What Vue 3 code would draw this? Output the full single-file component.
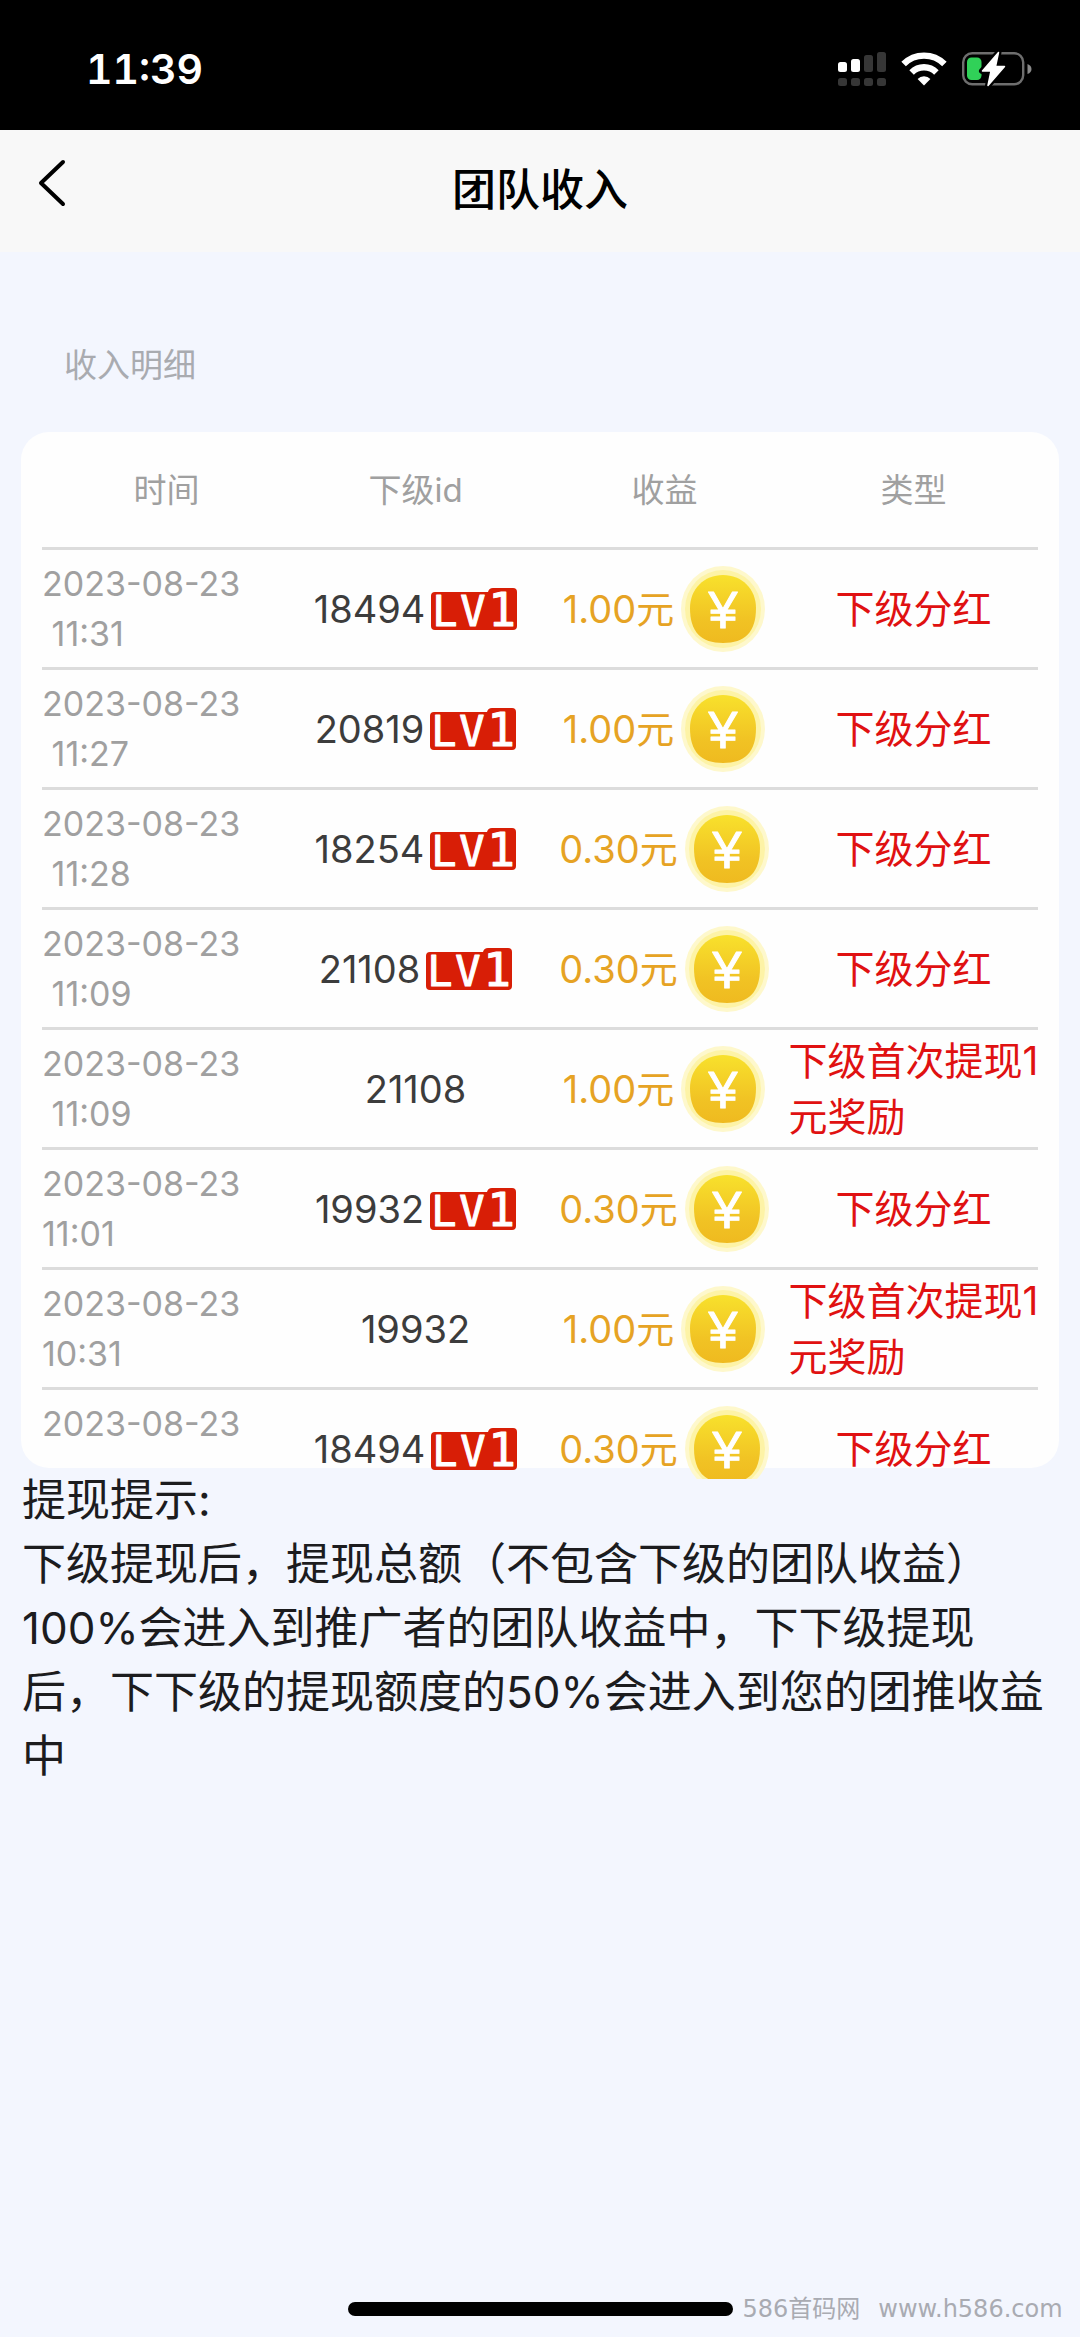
<script setup>
const records = [
  { date: '2023-08-23', time: ' 11:31', id: '18494', level: true, amount: '1.00', type: '下级分红' },
  { date: '2023-08-23', time: ' 11:27', id: '20819', level: true, amount: '1.00', type: '下级分红' },
  { date: '2023-08-23', time: ' 11:28', id: '18254', level: true, amount: '0.30', type: '下级分红' },
  { date: '2023-08-23', time: ' 11:09', id: '21108', level: true, amount: '0.30', type: '下级分红' },
  { date: '2023-08-23', time: ' 11:09', id: '21108', level: false, amount: '1.00', type: '下级首次提现1\n元奖励' },
  { date: '2023-08-23', time: '11:01', id: '19932', level: true, amount: '0.30', type: '下级分红' },
  { date: '2023-08-23', time: '10:31', id: '19932', level: false, amount: '1.00', type: '下级首次提现1\n元奖励' },
  { date: '2023-08-23', time: '', id: '18494', level: true, amount: '0.30', type: '下级分红' },
]
</script>

<template>
  <div class="page">
    <div class="status-bar">
      <span class="clock">11:39</span>
      <div class="status-icons">
        <svg width="48" height="34" viewBox="0 0 48 34" aria-hidden="true">
          <g fill="#fff">
            <rect x="0" y="10" width="9" height="10" rx="2.5" />
            <rect x="13" y="7" width="9" height="13" rx="2.5" />
          </g>
          <g fill="#363636">
            <rect x="26" y="3" width="9" height="17" rx="2.5" />
            <rect x="39" y="0" width="9" height="20" rx="2.5" />
            <rect x="0" y="26" width="9" height="8" rx="2.5" />
            <rect x="13" y="26" width="9" height="8" rx="2.5" />
            <rect x="26" y="26" width="9" height="8" rx="2.5" />
            <rect x="39" y="26" width="9" height="8" rx="2.5" />
          </g>
        </svg>
        <svg width="46" height="34" viewBox="0 0 46 34" aria-hidden="true">
          <g fill="none" stroke="#fff" stroke-width="6.4">
            <path d="M2.6 12 A29 29 0 0 1 43.4 12" />
            <path d="M10.6 20.4 A17.6 17.6 0 0 1 35.4 20.4" />
          </g>
          <path d="M23 33.4 L16.6 27 A9 9 0 0 1 29.4 27 Z" fill="#fff" />
        </svg>
        <svg width="70" height="38" viewBox="0 0 70 38" aria-hidden="true">
          <rect x="1.2" y="3.2" width="60" height="31" rx="9" fill="none" stroke="#6e6e6e" stroke-width="2.4" />
          <path d="M65.5 14 Q69.5 15.5 69.5 19 Q69.5 22.5 65.5 24 Z" fill="#8a8a8a" />
          <rect x="5" y="7.5" width="14.5" height="22.5" rx="4.5" fill="#30d158" />
          <path d="M36.5 2.5 L20 21 H29 L26 35.5 L42.5 16.5 H33 Z" fill="#fff" stroke="#000" stroke-width="6" stroke-linejoin="round" />
          <path d="M36.5 2.5 L20.5 21 H29 L26 35.5 L42.5 16.5 H33.5 Z" fill="#fff" stroke="#fff" stroke-width="1.5" stroke-linejoin="round" />
        </svg>
      </div>
    </div>

    <header class="nav">
      <button class="back" type="button" aria-label="返回">
        <svg width="30" height="50" viewBox="0 0 30 50" aria-hidden="true">
          <path d="M26 4 L4 25 L26 46" fill="none" stroke="#000" stroke-width="4" stroke-linecap="round" stroke-linejoin="round" />
        </svg>
      </button>
      <h1>团队收入</h1>
    </header>

    <main>
      <h2>收入明细</h2>

      <section class="card">
        <div class="scroller">
          <table>
            <thead>
              <tr>
                <th scope="col">时间</th>
                <th scope="col">下级id</th>
                <th scope="col">收益</th>
                <th scope="col">类型</th>
              </tr>
            </thead>
            <tbody>
              <tr v-for="(r, i) in records" :key="i">
                <td class="when">
                  <span>{{ r.date }}</span>
                  <span>{{ r.time }}</span>
                </td>
                <td>
                  <div class="cell member">
                    <span>{{ r.id }}</span>
                    <svg v-if="r.level" width="86" height="42" viewBox="0 0 86 42">
                      <path class="plate" d="M4 4 H57 V4 Q58 0 62 0 H82 Q86 0 86 4 V38 Q86 42 82 42 H4 Q0 42 0 38 V8 Q0 4 4 4 Z" />
                      <text x="14" y="38">L</text>
                      <text x="42" y="38">V</text>
                      <text class="rank" x="71" y="38">1</text>
                    </svg>
                  </div>
                </td>
                <td>
                  <div class="cell money">
                    <span>{{ r.amount }}元</span>
                    <svg width="86" height="88" viewBox="0 0 86 88">
                      <defs>
                        <linearGradient :id="'coin' + i" x1="0" y1="0" x2="0" y2="1">
                          <stop offset="0" stop-color="#f8e12c" />
                          <stop offset="0.65" stop-color="#f1c324" />
                          <stop offset="1" stop-color="#efba20" />
                        </linearGradient>
                      </defs>
                      <ellipse cx="43" cy="44" rx="42" ry="43" fill="#fef8cc" />
                      <ellipse cx="43" cy="44" rx="38" ry="39" fill="#fdf3a6" />
                      <path d="M43 10 C62 10 76 24 76 43 C76 67 65 78 43 78 C21 78 10 67 10 43 C10 24 24 10 43 10 Z" :fill="'url(#coin' + i + ')'" />
                      <text x="43" y="63">¥</text>
                    </svg>
                  </div>
                </td>
                <td>
                  <div class="cell kind"><span>{{ r.type }}</span></div>
                </td>
              </tr>
            </tbody>
          </table>
        </div>
      </section>

      <section class="notice">
        <p>提现提示:</p>
        <p>下级提现后，提现总额（不包含下级的团队收益）100%会进入到推广者的团队收益中，下下级提现后，下下级的提现额度的50%会进入到您的团推收益中</p>
      </section>
    </main>

    <footer>
      <div class="home-indicator"></div>
      <div class="watermark"><span>586首码网</span><span>www.h586.com</span></div>
    </footer>
  </div>
</template>

<style>
body {
  margin: 0;
  background: #f3f6fe;
}
</style>

<style scoped>
.page {
  display: flex;
  flex-direction: column;
  min-height: 100vh;
  background: #f3f6fe;
  color: #1c1c1e;
  font-family: Inter, "Noto Sans CJK SC", sans-serif;
}

h1,
h2,
p {
  margin: 0;
}

svg {
  display: block;
  flex: none;
  overflow: visible;
}

.status-bar {
  display: flex;
  align-items: center;
  justify-content: space-between;
  height: 130px;
  padding: 0 48px 0 86px;
  box-sizing: border-box;
  background: #000;
}

.clock {
  padding-top: 8px;
  color: #fff;
  font-size: 41px;
  font-weight: 600;
  font-variant-numeric: tabular-nums;
  line-height: 50px;
}

.status-icons {
  display: flex;
  align-items: center;
  gap: 15px;
  padding-top: 8px;
}

.nav {
  display: grid;
  grid-template-columns: 1fr auto 1fr;
  align-items: center;
  height: 122px;
  background: #f8f8f8;
  color: #000;
}

.back {
  justify-self: start;
  padding: 0 37px 16px;
  border: 0;
  background: none;
}

.nav h1 {
  padding-bottom: 2px;
  font-size: 44px;
  font-weight: 500;
  line-height: 64px;
}

main h2 {
  padding: 88px 64px 42px;
  color: #a9abb0;
  font-size: 33px;
  font-weight: 400;
  line-height: 50px;
}

.card {
  height: 1036px;
  margin: 0 21px;
  border-radius: 28px;
  background: #fefefe;
}

/* The list runs slightly past the bottom edge of the card. */
.scroller {
  position: relative;
  height: 1047px;
  padding: 0 21px;
  overflow: hidden;
}

table {
  width: 100%;
  table-layout: fixed;
  border-collapse: separate;
  border-spacing: 0;
}

th,
td {
  box-sizing: border-box;
  height: 120px;
  padding: 0;
  border-bottom: 3px solid #dcdcdc;
  vertical-align: middle;
}

th {
  height: 118px;
  padding-bottom: 4px;
  color: #a0a0a0;
  font-size: 33px;
  font-weight: 400;
}

.when {
  color: #a0a0a0;
  font-size: 34px;
  font-weight: 400;
  line-height: 50px;
}

.when span {
  display: block;
  min-height: 50px;
  white-space: pre;
}

.cell {
  display: flex;
  align-items: center;
  justify-content: center;
  font-size: 39px;
  line-height: 56px;
  white-space: nowrap;
}

.member {
  gap: 6px;
  color: #3c3c3c;
  font-size: 38px;
  font-weight: 400;
}

.member .plate {
  fill: #d81e06;
}

.member text {
  fill: #fff;
  stroke: #fff;
  stroke-width: 1;
  stroke-linejoin: round;
  font-family: "DejaVu Sans Mono", monospace;
  font-size: 42px;
  text-anchor: middle;
}

.member .rank {
  font-size: 46px;
}

.money {
  gap: 6px;
  color: #e6a324;
  font-size: 38px;
}

.money text {
  fill: #fff;
  stroke: #fff;
  stroke-width: 1;
  stroke-linejoin: round;
  font-family: "Liberation Sans", Arial, sans-serif;
  font-size: 52px;
  text-anchor: middle;
}

.kind {
  color: #e01111;
}

.kind span {
  white-space: pre;
}

.notice {
  padding: 0 22px;
  font-size: 44px;
  line-height: 64px;
}

footer {
  display: grid;
  grid-template-columns: 1fr 385px 1fr;
  align-items: center;
  margin-top: auto;
  padding-bottom: 12px;
}

.home-indicator {
  grid-column: 2;
  height: 14px;
  border-radius: 7px;
  background: #000;
}

.watermark {
  display: flex;
  gap: 18px;
  padding-left: 10px;
  color: #a9abb2;
  font-family: "DejaVu Sans", "Noto Sans CJK SC", sans-serif;
  font-size: 24px;
  line-height: 32px;
  white-space: nowrap;
}
</style>
